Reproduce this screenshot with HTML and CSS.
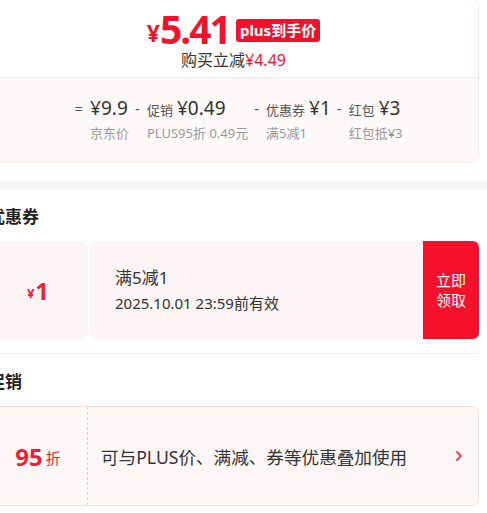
FILE: index.html
```html
<!DOCTYPE html>
<html lang="zh-CN">
<head>
    <meta charset="UTF-8">
    <meta name="viewport" content="width=device-width, initial-scale=1.0">
    <title>到手价明细</title>
    <link rel="stylesheet" href="styles.css">
</head>
<body>
    <div class="page">
        <div class="price-card">
            <div class="price-head">
                <div class="final-price">
                    <span class="yen">¥</span><span class="num">5.41</span>
                    <span class="tag">plus到手价</span>
                </div>
                <div class="saving">购买立减<span class="red">¥4.49</span></div>
            </div>
            <div class="price-break">
                <span class="op">=</span>
                <div class="part">
                    <div class="part-top"><span class="amount">¥9.9</span></div>
                    <div class="part-desc">京东价</div>
                </div>
                <span class="op">-</span>
                <div class="part">
                    <div class="part-top"><span class="label">促销</span><span class="amount">¥0.49</span></div>
                    <div class="part-desc">PLUS95折 0.49元</div>
                </div>
                <span class="op">-</span>
                <div class="part">
                    <div class="part-top"><span class="label">优惠券</span><span class="amount">¥1</span></div>
                    <div class="part-desc">满5减1</div>
                </div>
                <span class="op">-</span>
                <div class="part">
                    <div class="part-top"><span class="label">红包</span><span class="amount">¥3</span></div>
                    <div class="part-desc">红包抵¥3</div>
                </div>
            </div>
        </div>
    </div>

    <div class="band"></div>

    <div class="page">
        <div class="section first">
            <h2 class="section-title">优惠券</h2>
            <div class="coupon">
                <div class="coupon-amount"><span class="small">¥</span>1</div>
                <div class="coupon-info">
                    <div class="coupon-rule">满5减1</div>
                    <div class="coupon-date">2025.10.01 23:59前有效</div>
                </div>
                <button class="coupon-btn">立即<br>领取</button>
            </div>
        </div>
        <div class="section">
            <h2 class="section-title">促销</h2>
            <div class="promo">
                <div class="promo-left"><span class="big">95</span><span class="unit">折</span></div>
                <div class="promo-text">可与PLUS价、满减、券等优惠叠加使用</div>
                <svg class="chevron" width="8" height="12" viewBox="0 0 8 12">
                    <polyline points="2,2 6,6 2,10" fill="none" stroke="#e5485f" stroke-width="2" stroke-linecap="round" stroke-linejoin="round"/>
                </svg>
            </div>
        </div>
    </div>
</body>
</html>
```

FILE: styles.css
```css
body {
    margin: 0;
    background-color: #fff;
    font-family: "Noto Sans", "Noto Sans CJK SC", sans-serif;
    color: #333;
}
.page {
    margin-left: -12px;
    width: 491px;
}
.red {
    color: #f2142c;
}

/* price card */
.price-card {
    margin-top: -2px;
    border: 1px solid #f6e6e8;
    border-radius: 8px;
    overflow: hidden;
}
.price-head {
    text-align: center;
    padding: 10px 0 7px;
    border-bottom: 1px solid #f6e8ea;
}
.final-price {
    height: 40px;
    display: flex;
    align-items: center;
    justify-content: center;
    color: #f2142c;
    font-weight: bold;
}
.final-price .yen {
    font-size: 23px;
    line-height: 24px;
    margin-top: 8px;
}
.final-price .num {
    font-size: 39px;
    letter-spacing: -2px;
    line-height: 34px;
    margin-right: 6px;
}
.tag {
    background-color: #f5102b;
    color: #fff;
    font-size: 15px;
    line-height: 23px;
    height: 23px;
    padding: 0 4px;
    border-radius: 3px;
    margin-top: 3px;
}
.saving {
    margin-top: 1px;
    font-size: 16px;
    line-height: 20px;
}
.price-break {
    background-color: #fdf9f9;
    display: flex;
    justify-content: center;
    align-items: flex-start;
    padding: 17px 0 20px 4px;
}
.op {
    font-size: 15px;
    line-height: 26px;
    color: #555;
    padding: 0 7px 0 6px;
}
.part-top {
    height: 26px;
    line-height: 26px;
    white-space: nowrap;
}
.label {
    font-size: 13px;
    color: #555;
    margin-right: 4px;
}
.amount {
    font-size: 19px;
    color: #333;
}
.part-desc {
    margin-top: 3px;
    font-size: 13px;
    line-height: 18px;
    color: #999;
    white-space: nowrap;
}

.band {
    margin-top: 18px;
    height: 8px;
    background-color: #f5f7fb;
}

/* sections */
.section {
    padding-top: 16px;
}
.section.first {
    padding-bottom: 14px;
    border-bottom: 1px solid #f0f0f0;
}
.section-title {
    margin: 0 0 12px;
    font-size: 17px;
    line-height: 24px;
    font-weight: bold;
    color: #222;
}

.coupon {
    display: flex;
    height: 98px;
    gap: 1px;
}
.coupon-amount {
    position: relative;
    width: 100px;
    background-color: #fdf4f5;
    border-radius: 6px 0 0 6px;
    display: flex;
    align-items: center;
    justify-content: center;
    color: #ee2239;
    font-size: 24px;
    font-weight: bold;
}
.coupon-amount .small {
    font-size: 13px;
    margin-top: 6px;
    margin-right: 1px;
}
.coupon-amount::before,
.coupon-amount::after {
    content: "";
    position: absolute;
    right: -5px;
    width: 9px;
    height: 9px;
    border-radius: 50%;
    background-color: #fff;
}
.coupon-amount::before {
    top: -5px;
}
.coupon-amount::after {
    bottom: -5px;
}
.coupon-info {
    flex: 1;
    background-color: #fdf4f5;
    padding-left: 26px;
    display: flex;
    flex-direction: column;
    justify-content: center;
}
.coupon-rule {
    font-size: 17px;
    line-height: 24px;
}
.coupon-date {
    font-size: 15px;
    line-height: 22px;
    margin-top: 2px;
}
.coupon-btn {
    width: 56px;
    border: none;
    background-color: #f5102b;
    color: #fff;
    font-family: inherit;
    font-size: 15px;
    line-height: 20px;
    border-radius: 0 6px 6px 0;
    padding: 0;
}

.promo {
    display: flex;
    align-items: stretch;
    height: 98px;
    border: 1px solid #f3e0e3;
    border-radius: 6px;
    background-color: #fdf6f7;
}
.promo-left {
    width: 98px;
    border-right: 1px dashed #e5cfd3;
    display: flex;
    align-items: center;
    justify-content: center;
    color: #e8213a;
}
.promo-left .big {
    font-size: 24px;
    font-weight: bold;
}
.promo-left .unit {
    font-size: 15px;
    margin-left: 3px;
    margin-top: 3px;
}
.promo-text {
    flex: 1;
    padding-left: 13px;
    font-size: 17.6px;
    display: flex;
    align-items: center;
}
.chevron {
    align-self: center;
    margin-right: 15px;
}
```
